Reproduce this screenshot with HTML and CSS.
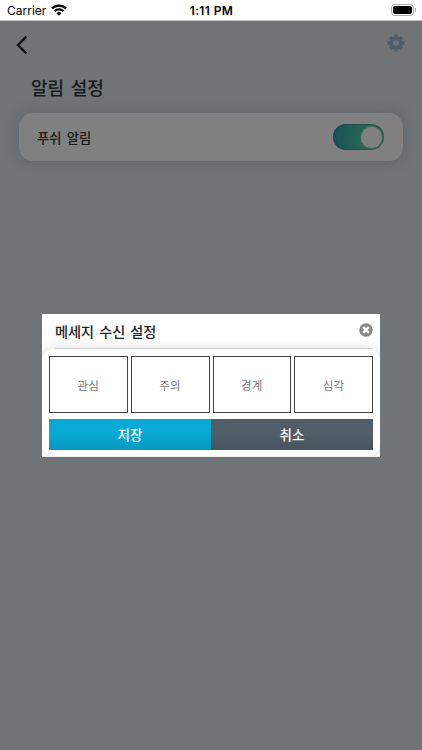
FILE: index.html
```html
<!DOCTYPE html>
<html lang="ko">
<head>
  <meta charset="UTF-8">
  <meta name="viewport" content="width=device-width, initial-scale=1">
  <title>알림 설정</title>
  <link rel="stylesheet" href="styles.css">
</head>
<body>

  <div class="status-bar">
    <div class="carrier">
      <span>Carrier</span>
      <svg width="16" height="12" viewBox="0 0 16 12" fill="none" stroke="#000" stroke-width="2.3">
        <path d="M1 4.4a10 10 0 0 1 14 0"/>
        <path d="M3.6 7.3a6.2 6.2 0 0 1 8.8 0"/>
        <path d="M8 11.7L5.5 9.2a3.5 3.5 0 0 1 5 0z" fill="#000" stroke="none"/>
      </svg>
    </div>
    <div class="clock">1:11 PM</div>
    <div class="battery">
      <div class="battery-body"></div>
      <div class="battery-tip"></div>
    </div>
  </div>

  <main>
    <header>
      <svg class="back" width="12" height="20" viewBox="0 0 12 20" fill="none" stroke="#111214" stroke-width="2.4">
        <path d="M10.2 1.7L2 10l8.2 8.3"/>
      </svg>
      <svg class="gear" width="18" height="18" viewBox="-9 -9 18 18">
        <circle r="4.7" fill="none" stroke="#505c67" stroke-width="3.8"/>
        <g stroke="#505c67" stroke-width="3.6">
          <path d="M0-8.6V-5M0 5v3.6M-8.6 0H-5M5 0h3.6"/>
          <path d="M0-8.6V-5M0 5v3.6M-8.6 0H-5M5 0h3.6" transform="rotate(45)"/>
        </g>
      </svg>
    </header>

    <h1>알림 설정</h1>

    <div class="card">
      <span>푸쉬 알림</span>
      <div class="switch"><div class="knob"></div></div>
    </div>
  </main>

  <div class="modal">
    <div class="modal-head">
      <h2>메세지 수신 설정</h2>
      <svg width="14" height="14" viewBox="0 0 14 14">
        <circle cx="7" cy="7" r="6.7" fill="#858585"/>
        <path d="M4.2 4.2l5.6 5.6M9.8 4.2l-5.6 5.6" stroke="#fff" stroke-width="2.5"/>
      </svg>
    </div>
    <div class="modal-body">
      <div class="levels">
        <div class="level">관심</div>
        <div class="level">주의</div>
        <div class="level">경계</div>
        <div class="level">심각</div>
      </div>
      <div class="buttons">
        <button class="save">저장</button>
        <button class="cancel">취소</button>
      </div>
    </div>
  </div>

</body>
</html>
```
FILE: styles.css
```css
* {
  box-sizing: border-box;
}

body {
  margin: 0;
  height: 750px;
  overflow: hidden;
  display: flex;
  flex-direction: column;
  font-family: "Noto Sans CJK KR", sans-serif;
  background: #707477;
}

.status-bar {
  height: 21px;
  padding: 0 6px 0 7px;
  display: grid;
  grid-template-columns: 1fr auto 1fr;
  align-items: center;
  background: #fff;
  border-bottom: 1px solid #c4c5c6;
  font-family: Inter, sans-serif;
  font-size: 12px;
  color: #000;
}

.carrier {
  display: flex;
  align-items: center;
  gap: 5px;
}

.clock {
  font-weight: 600;
  letter-spacing: 0.4px;
}

.battery {
  justify-self: end;
  display: flex;
  align-items: center;
  gap: 1px;
}

.battery-body {
  width: 23px;
  height: 12px;
  border: 1px solid #aaa;
  border-radius: 4px;
  padding: 1px;
  background: #000 content-box;
}

.battery-tip {
  width: 1px;
  height: 4px;
  background: #aaa;
}

main {
  flex: 1;
}

header {
  display: flex;
  justify-content: space-between;
  padding: 13px 17px 0 16px;
  height: 45px;
}

.back {
  margin-top: 1px;
}

h1 {
  margin: 7px 0 0 31px;
  font-size: 18px;
  font-weight: 500;
  line-height: 28px;
  word-spacing: 1.5px;
  color: #17191b;
}

.card {
  display: flex;
  align-items: center;
  justify-content: space-between;
  width: 384px;
  height: 48px;
  margin: 12px 0 0 19px;
  padding: 0 19px 0 18px;
  border-radius: 14px;
  background: #808080;
  box-shadow: 0 0 14px rgba(70, 72, 80, 0.4);
  font-size: 13.3px;
  font-weight: 500;
  word-spacing: 1.5px;
  color: #1a1a1a;
}

.switch {
  display: flex;
  justify-content: flex-end;
  width: 51px;
  height: 26px;
  padding: 3px 2px;
  border-radius: 13px;
  background: linear-gradient(100deg, #15545d, #2d6752 70%);
  box-shadow: inset 0 0 3px rgba(0, 0, 0, 0.4);
}

.knob {
  width: 21px;
  height: 21px;
  border-radius: 50%;
  background: #808080;
  box-shadow: 0 0 2px #808080;
}

/* dialog over the dimmed page */
.modal {
  position: absolute;
  top: 314px;
  left: 42px;
  width: 338px;
  height: 143px;
  background: #fff;
  overflow: hidden;
}

.modal-head {
  display: flex;
  justify-content: space-between;
  height: 35px;
  margin: 0 7px 0 13px;
  border-bottom: 1px solid #ddd;
}

.modal-head svg {
  margin-top: 9px;
}

h2 {
  margin: 0;
  font-size: 14.2px;
  font-weight: 500;
  line-height: 35px;
  word-spacing: 1px;
  color: #222;
}

.modal-body {
  height: 107px;
  padding: 7px 7px 0;
  border-radius: 12px;
  background: #fff;
  box-shadow: 0 0 14px rgba(0, 0, 0, 0.15);
}

.levels {
  display: grid;
  grid-template-columns: repeat(4, 1fr);
  gap: 3px;
}

.level {
  display: flex;
  align-items: center;
  justify-content: center;
  height: 57px;
  border: 1px solid #444;
  font-size: 11.5px;
  letter-spacing: 0.2px;
  color: #777;
}

.buttons {
  display: flex;
  margin-top: 6px;
}

button {
  flex: 1;
  height: 31px;
  padding: 0 0 1px;
  border: none;
  font-family: inherit;
  font-size: 13.5px;
  font-weight: 500;
  color: #fff;
}

.save {
  background: linear-gradient(#07aad5 40%, #0899c0);
}

.cancel {
  background: linear-gradient(#515d68 50%, #48535d);
}
```
